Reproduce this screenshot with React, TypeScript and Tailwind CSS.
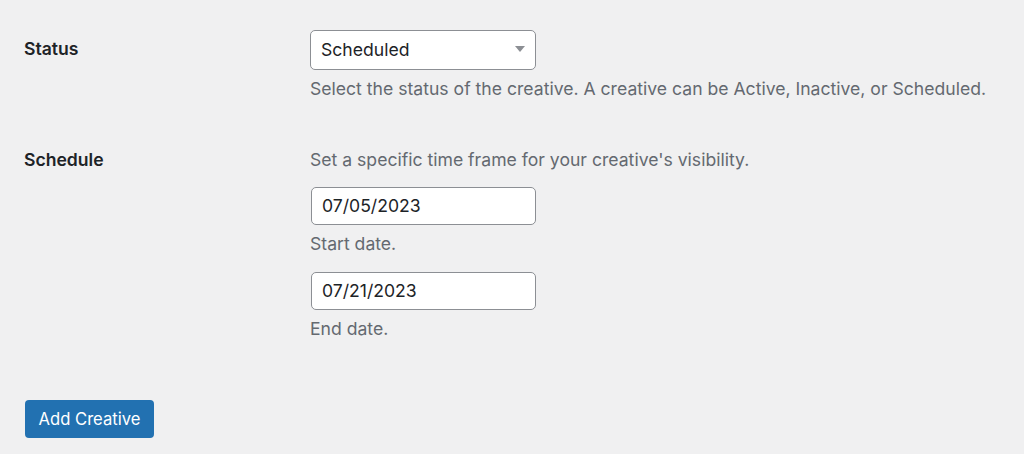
export default function App() {
  return (
    <div
      className="h-[454px] w-full overflow-hidden bg-[#f0f0f1] pl-6 pt-[30px] text-[17.6px] text-[#1d2327]"
      style={{ fontFamily: 'Inter, "Liberation Sans", sans-serif' }}
    >
      <div className="grid grid-cols-[286px_1fr]">
        <div className="font-semibold leading-[38px]">Status</div>
        <div>
          <div className="relative flex h-10 w-[226px] items-center rounded-[5px] border border-[#8c8f94] bg-white pl-[10px]">
            <span>Scheduled</span>
            <svg className="absolute right-[10px] top-[15px]" width="10" height="7" viewBox="0 0 10 7">
              <path d="M0 0h10L5 6z" fill="#8c8f94" />
            </svg>
          </div>
          <p className="mt-[7px] leading-6 text-[#646970]">
            Select the status of the creative. A creative can be Active, Inactive, or Scheduled.
          </p>
        </div>
      </div>

      <div className="mt-[47px] grid grid-cols-[286px_1fr]">
        <div className="font-semibold leading-6">Schedule</div>
        <div>
          <p className="leading-6 text-[#646970]">Set a specific time frame for your creative's visibility.</p>
          <div className="ml-px mt-[15px] flex h-[38px] w-[225px] items-center rounded-[5px] border border-[#8c8f94] bg-white pl-[10px]">
            07/05/2023
          </div>
          <p className="mt-[7px] leading-6 text-[#646970]">Start date.</p>
          <div className="ml-px mt-[16px] flex h-[38px] w-[225px] items-center rounded-[5px] border border-[#8c8f94] bg-white pl-[10px]">
            07/21/2023
          </div>
          <p className="mt-[7px] leading-6 text-[#646970]">End date.</p>
        </div>
      </div>

      <button className="ml-px mt-[59px] flex h-[38px] w-[129px] items-center justify-center rounded-[4px] bg-[#2271b1] text-[16.6px] text-white">
        Add Creative
      </button>
    </div>
  );
}
